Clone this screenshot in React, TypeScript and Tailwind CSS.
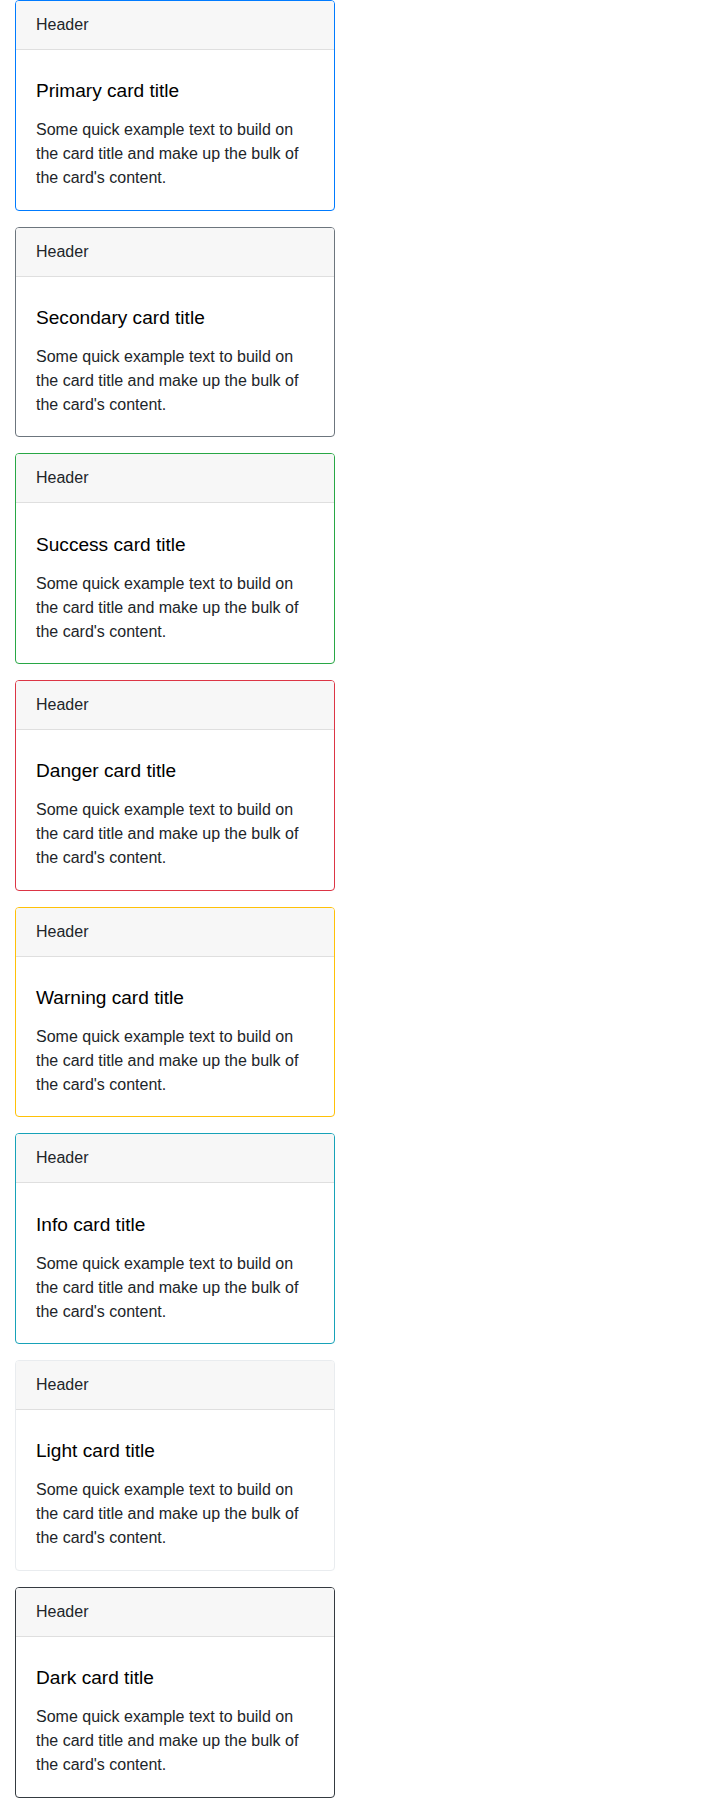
const cards = [
  { name: 'Primary', border: 'border-[#007bff]' },
  { name: 'Secondary', border: 'border-[#6c757d]' },
  { name: 'Success', border: 'border-[#28a745]' },
  { name: 'Danger', border: 'border-[#dc3545]' },
  { name: 'Warning', border: 'border-[#ffc107]' },
  { name: 'Info', border: 'border-[#17a2b8]' },
  { name: 'Light', border: 'border-[#e9ecef]' },
  { name: 'Dark', border: 'border-[#343a40]' },
];

export default function App() {
  return (
    <div className="min-h-screen bg-white px-[15px] font-['Liberation_Sans',Arial,sans-serif] text-[#212529]">
      {cards.map((c) => (
        <div key={c.name} className={`mb-4 w-[320px] rounded border ${c.border} bg-white`}>
          <div className="rounded-t-[3px] border-b border-[#dfdfdf] bg-[#f7f7f7] px-5 py-3 text-base leading-6">
            Header
          </div>
          <div className="px-5 pb-[19.5px] pt-[29.2px]">
            <h5 className="mb-[15px] text-[19.1px] leading-6 text-black">{c.name} card title</h5>
            <p className="text-base leading-6">
              Some quick example text to build on the card title and make up the bulk of the card's content.
            </p>
          </div>
        </div>
      ))}
    </div>
  );
}
